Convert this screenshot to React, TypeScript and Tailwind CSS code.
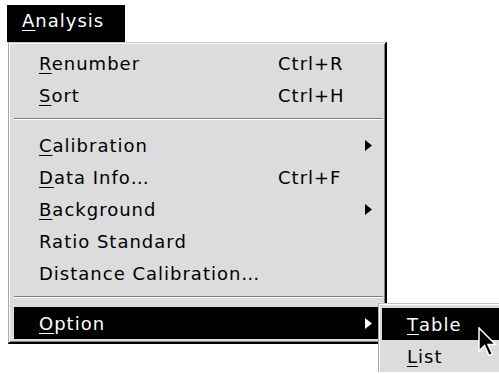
import React from "react";

type Item =
  | { kind: "sep" }
  | { kind: "item"; label: string; u?: number; shortcut?: string; sub?: boolean; active?: boolean };

const items: Item[] = [
  { kind: "item", label: "Renumber", u: 0, shortcut: "Ctrl+R" },
  { kind: "item", label: "Sort", u: 0, shortcut: "Ctrl+H" },
  { kind: "sep" },
  { kind: "item", label: "Calibration", u: 0, sub: true },
  { kind: "item", label: "Data Info…", u: 0, shortcut: "Ctrl+F" },
  { kind: "item", label: "Background", u: 0, sub: true },
  { kind: "item", label: "Ratio Standard" },
  { kind: "item", label: "Distance Calibration…" },
  { kind: "sep" },
  { kind: "item", label: "Option", u: 0, sub: true, active: true },
];

function Label({ text, u }: { text: string; u?: number }) {
  if (u === undefined) return <>{text}</>;
  return (
    <>
      {text.slice(0, u)}
      <span className="underline decoration-1 underline-offset-[3px]">{text[u]}</span>
      {text.slice(u + 1)}
    </>
  );
}

function Arrow({ white }: { white?: boolean }) {
  return (
    <svg width="7" height="11" viewBox="0 0 7 11" className="block">
      <path d="M0 0 L7 5.5 L0 11 Z" fill={white ? "#fff" : "#000"} />
    </svg>
  );
}

export default function App() {
  return (
    <div className="relative w-[499px] h-[374px] bg-white overflow-hidden font-['DejaVu_Sans',sans-serif] text-[18px] tracking-[1px] text-black">
      <div className="ml-[7px] mt-[5px] w-[118px] h-[37px] bg-black text-white pl-[15px] pt-[5px] leading-[22px]">
        <Label text="Analysis" u={0} />
      </div>
      <div className="ml-[8px] w-[379px] bg-[#dcdcdc] border-t border-l border-t-[#c4c4c4] border-l-[#a8a8a8] border-r-2 border-b-2 border-r-black border-b-black shadow-[inset_1px_1px_0_#fff,inset_-1px_-1px_0_#808080] pt-[4px] pb-[3px] pl-[5px] pr-[2px]">
        {items.map((it, i) =>
          it.kind === "sep" ? (
            <div key={i} className="h-[18px] pt-[7px]">
              <div className="h-px bg-[#808080]" />
              <div className="h-px bg-white" />
            </div>
          ) : (
            <div
              key={i}
              className={
                "flex items-center h-[32px] pl-[25px] pr-[11px] whitespace-nowrap " +
                (it.active ? "bg-black text-white" : "")
              }
            >
              <span className="w-[239px] shrink-0">
                <Label text={it.label} u={it.u} />
              </span>
              {it.shortcut && <span>{it.shortcut}</span>}
              {it.sub && (
                <span className="ml-auto">
                  <Arrow white={it.active} />
                </span>
              )}
            </div>
          )
        )}
      </div>

      <div className="absolute left-[378px] top-[303px] w-[140px] bg-[#dcdcdc] border-t border-l border-t-[#c4c4c4] border-l-[#a8a8a8] shadow-[inset_1px_1px_0_#fff] pt-[4px] pl-[3px]">
        <div className="flex items-center h-[32px] pl-[25px] bg-black text-white">
          <Label text="Table" u={0} />
        </div>
        <div className="flex items-center h-[32px] pl-[25px]">
          <Label text="List" u={0} />
        </div>
      </div>

      <svg
        className="absolute left-[478px] top-[327px]"
        width="20"
        height="31"
        viewBox="0 0 20 31"
      >
        <path
          d="M1 1 L1 24 L6.5 18.5 L11 28.5 L14.5 27 L10 17.5 L17.5 17.5 Z"
          fill="#000"
          stroke="#fff"
          strokeWidth="1.5"
          strokeLinejoin="miter"
        />
      </svg>
    </div>
  );
}
